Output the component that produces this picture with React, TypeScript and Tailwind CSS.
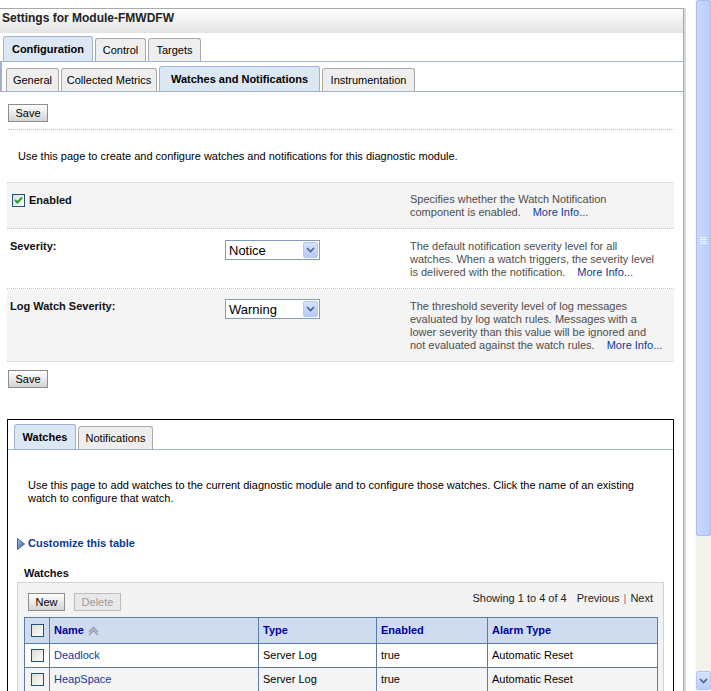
import React from 'react';

type TabProps = { label: string; active?: boolean; w: string };

function Tab({ label, active, w }: TabProps) {
  return (
    <div
      className={
        active
          ? `${w} h-[25px] flex items-center justify-center rounded-t-[3px] border border-b-0 border-[#9fb3d2] bg-[#dce7f4] font-bold text-black`
          : `${w} h-[23px] flex items-center justify-center rounded-t-[3px] border border-b-0 border-[#a9a9a9] bg-[#eeeeee] text-black`
      }
    >
      {label}
    </div>
  );
}

function Button({ label, w, disabled }: { label: string; w: string; disabled?: boolean }) {
  return (
    <div
      className={
        disabled
          ? `${w} h-[18px] flex items-center justify-center border border-[#bdbdbd] bg-[#e9e9e9] text-[#9a9a9a]`
          : `${w} h-[18px] flex items-center justify-center border border-[#8d8d8d] bg-linear-to-b from-white to-[#d4d4d4] text-black`
      }
    >
      {label}
    </div>
  );
}

function Chevron({ color = '#4d6185' }: { color?: string }) {
  return (
    <svg width="9" height="6" viewBox="0 0 9 6">
      <polyline points="1,1 4.5,4.5 8,1" fill="none" stroke={color} strokeWidth="1.6" />
    </svg>
  );
}

function Select({ value }: { value: string }) {
  return (
    <div className="w-[95px] h-[20px] flex items-center justify-between border border-[#7f9db9] bg-white">
      <span className="pl-[3px] text-[13px] text-black leading-none">{value}</span>
      <div className="mr-[1px] w-[15px] h-[16px] flex items-center justify-center rounded-[2px] border border-[#b5c8f5] bg-linear-to-b from-[#d6e1fd] to-[#b7cbfa]">
        <Chevron />
      </div>
    </div>
  );
}

function Box({ checked }: { checked?: boolean }) {
  return (
    <div className="w-[13px] h-[13px] flex items-center justify-center border border-[#1c5180] bg-linear-to-br from-[#dcdcd6] to-white">
      {checked && (
        <svg width="9" height="9" viewBox="0 0 9 9">
          <polyline points="1,4 3.5,6.5 8,1.5" fill="none" stroke="#21a121" strokeWidth="2" />
        </svg>
      )}
    </div>
  );
}

function MoreInfo() {
  return <span className="ml-[12px] text-[#0b3a9b]">More Info...</span>;
}

function Desc({ lines }: { lines: React.ReactNode[] }) {
  return (
    <div className="text-[#4d4d4d] leading-[13px] whitespace-nowrap">
      {lines.map((l, i) => (
        <div key={i}>{l}</div>
      ))}
    </div>
  );
}

const rows = [
  { name: 'Deadlock', type: 'Server Log', enabled: 'true', alarm: 'Automatic Reset' },
  { name: 'HeapSpace', type: 'Server Log', enabled: 'true', alarm: 'Automatic Reset' },
];

export default function App() {
  return (
    <div className="flex w-[711px] h-[691px] overflow-hidden bg-white text-[11px] text-black font-['Liberation_Sans',Arial,sans-serif]">
      <div className="w-[695px] pt-[8px]">
        {/* settings panel */}
        <div className="w-[684px] h-[700px] border-t border-r border-[#a9a9a9] shadow-[2px_0_0_#dadada]">
          <div className="h-[24px] pt-[2px] pl-[2px] leading-[14px] bg-linear-to-b from-white to-[#e3e3e3] text-[12px] font-bold text-[#222]">
            Settings for Module-FMWDFW
          </div>

          {/* top level tabs */}
          <div className="mt-[3px] flex items-end gap-[2px] pl-[3px] border-b border-[#9fb3d2]">
            <Tab label="Configuration" active w="w-[90px]" />
            <Tab label="Control" w="w-[51px]" />
            <Tab label="Targets" w="w-[53px]" />
          </div>
          <div className="h-[30px] flex items-end gap-[2px] pl-[4px] border-l-2 border-b border-[#9fb3d2]">
            <Tab label="General" w="w-[53px]" />
            <Tab label="Collected Metrics" w="w-[96px]" />
            <Tab label="Watches and Notifications" active w="w-[161px]" />
            <Tab label="Instrumentation" w="w-[93px]" />
          </div>

          <div className="mt-[12px] ml-[8px]">
            <Button label="Save" w="w-[40px]" />
          </div>
          <div className="mt-[7px] ml-[8px] w-[666px] border-t border-dotted border-[#bcbcbc]" />

          <div className="mt-[20px] pl-[18px] leading-[13px]">
            Use this page to create and configure watches and notifications for this diagnostic module.
          </div>

          {/* form rows */}
          <div className="mt-[19px] ml-[7px] w-[667px]">
            <div className="grid grid-cols-[215px_185px_1fr] pl-[3px] pt-[10px] pb-[9px] bg-[#f4f4f4] border-y border-dotted border-[#c4c4c4]">
              <div className="flex items-center gap-[4px] pl-[2px] h-[13px] mt-[1px]">
                <Box checked />
                <span className="font-bold text-[#111]">Enabled</span>
              </div>
              <div />
              <Desc
                lines={[
                  'Specifies whether the Watch Notification',
                  <>component is enabled.<MoreInfo /></>,
                ]}
              />
            </div>
            <div className="grid grid-cols-[215px_185px_1fr] pl-[3px] pt-[11px] pb-[9px] bg-white border-b border-dotted border-[#c4c4c4]">
              <div className="font-bold text-[#111] leading-[13px]">Severity:</div>
              <Select value="Notice" />
              <Desc
                lines={[
                  'The default notification severity level for all',
                  'watches. When a watch triggers, the severity level',
                  <>is delivered with the notification.<MoreInfo /></>,
                ]}
              />
            </div>
            <div className="grid grid-cols-[215px_185px_1fr] pl-[3px] pt-[11px] pb-[9px] bg-[#f4f4f4] border-b border-dotted border-[#c4c4c4]">
              <div className="font-bold text-[#111] leading-[13px]">Log Watch Severity:</div>
              <div className="-mt-[1px]">
                <Select value="Warning" />
              </div>
              <Desc
                lines={[
                  'The threshold severity level of log messages',
                  'evaluated by log watch rules. Messages with a',
                  'lower severity than this value will be ignored and',
                  <>not evaluated against the watch rules.<MoreInfo /></>,
                ]}
              />
            </div>
          </div>

          <div className="mt-[8px] ml-[8px]">
            <Button label="Save" w="w-[40px]" />
          </div>

          {/* watches / notifications box */}
          <div className="mt-[31px] ml-[7px] w-[667px] h-[300px] border border-black">
            <div className="pt-[4px] flex items-end gap-[2px] pl-[6px] border-b border-[#9fb3d2]">
              <Tab label="Watches" active w="w-[62px]" />
              <Tab label="Notifications" w="w-[75px]" />
            </div>

            <div className="mt-[29px] pl-[20px] leading-[13px] whitespace-nowrap">
              <div>
                Use this page to add watches to the current diagnostic module and to configure those watches. Click the name of an existing
              </div>
              <div>watch to configure that watch.</div>
            </div>

            <div className="mt-[32px] pl-[9px] flex items-center gap-[3px] h-[13px]">
              <svg width="8" height="12" viewBox="0 0 8 12">
                <defs>
                  <linearGradient id="tri" x1="0" y1="0" x2="1" y2="1">
                    <stop offset="0" stopColor="#a9c2ea" />
                    <stop offset="1" stopColor="#2c5aa8" />
                  </linearGradient>
                </defs>
                <polygon points="0.5,0.5 7.5,6 0.5,11.5" fill="url(#tri)" stroke="#3a62a8" strokeWidth="1" />
              </svg>
              <span className="font-bold text-[#0a3a96]">Customize this table</span>
            </div>

            <div className="mt-[17px] pl-[16px] font-bold text-[#111] leading-[13px]">Watches</div>

            <div className="mt-[2px] ml-[9px] w-[647px] h-[200px] bg-[#f3f3f3] border border-[#d2d2d2]">
              <div className="pt-[10px] pl-[10px] pr-[10px] flex justify-between items-start">
                <div className="flex gap-[9px]">
                  <Button label="New" w="w-[37px]" />
                  <Button label="Delete" w="w-[47px]" disabled />
                </div>
                <div className="-mt-[3px] text-[#222] whitespace-nowrap">
                  Showing 1 to 4 of 4
                  <span className="ml-[10px]">Previous</span>
                  <span className="mx-[4px] text-[#777]">|</span>
                  <span>Next</span>
                </div>
              </div>

              <table className="mt-[6px] ml-[6px] w-[634px] table-fixed border-collapse border border-[#5b7ca6]">
                <colgroup>
                  <col className="w-[25px]" />
                  <col className="w-[209px]" />
                  <col className="w-[118px]" />
                  <col className="w-[111px]" />
                  <col />
                </colgroup>
                <thead>
                  <tr className="h-[26px] bg-[#cfdcef] text-[#00009a] font-bold text-left">
                    <th className="border border-[#5b7ca6]">
                      <div className="flex justify-center">
                        <Box />
                      </div>
                    </th>
                    <th className="border border-[#5b7ca6] pl-[4px]">
                      <div className="flex items-center gap-[3px]">
                        Name
                        <svg width="13" height="10" viewBox="0 0 13 10">
                          <polyline points="2,6 6.5,1.5 11,6" fill="none" stroke="#8c96ad" strokeWidth="1.3" />
                          <polyline points="2,9 6.5,4.5 11,9" fill="none" stroke="#8c96ad" strokeWidth="1.3" />
                        </svg>
                      </div>
                    </th>
                    <th className="border border-[#5b7ca6] pl-[4px]">Type</th>
                    <th className="border border-[#5b7ca6] pl-[4px]">Enabled</th>
                    <th className="border border-[#5b7ca6] pl-[4px]">Alarm Type</th>
                  </tr>
                </thead>
                <tbody>
                  {rows.map((r, i) => (
                    <tr key={r.name} className={i % 2 === 0 ? 'h-[24px] bg-white' : 'h-[24px] bg-[#f4f4f4]'}>
                      <td className="border border-[#5b7ca6]">
                        <div className="flex justify-center">
                          <Box />
                        </div>
                      </td>
                      <td className="border border-[#5b7ca6] pl-[4px] text-[#0f3aa0]">{r.name}</td>
                      <td className="border border-[#5b7ca6] pl-[4px]">{r.type}</td>
                      <td className="border border-[#5b7ca6] pl-[4px]">{r.enabled}</td>
                      <td className="border border-[#5b7ca6] pl-[4px]">{r.alarm}</td>
                    </tr>
                  ))}
                </tbody>
              </table>
            </div>
          </div>
        </div>
      </div>

      {/* window scrollbar */}
      <div className="w-[16px] h-full flex flex-col bg-[#f3f2ec] border-l border-[#fafafa]">
        <div className="h-[536px] flex items-center justify-center rounded-[2px] border border-[#a9bff3] bg-linear-to-r from-[#c9d8fd] to-[#bccffa]">
          <div className="flex flex-col gap-[1px] -mt-[56px]">
            <div className="w-[7px] h-px bg-[#eef3ff]" />
            <div className="w-[7px] h-px bg-[#eef3ff]" />
            <div className="w-[7px] h-px bg-[#eef3ff]" />
            <div className="w-[7px] h-px bg-[#eef3ff]" />
          </div>
        </div>
        <div className="flex-1" />
        <div className="mb-[1px] h-[19px] flex items-center justify-center rounded-[2px] border border-[#b1c5f5] bg-linear-to-b from-[#d6e2fd] to-[#bccefa]">
          <Chevron />
        </div>
      </div>
    </div>
  );
}
